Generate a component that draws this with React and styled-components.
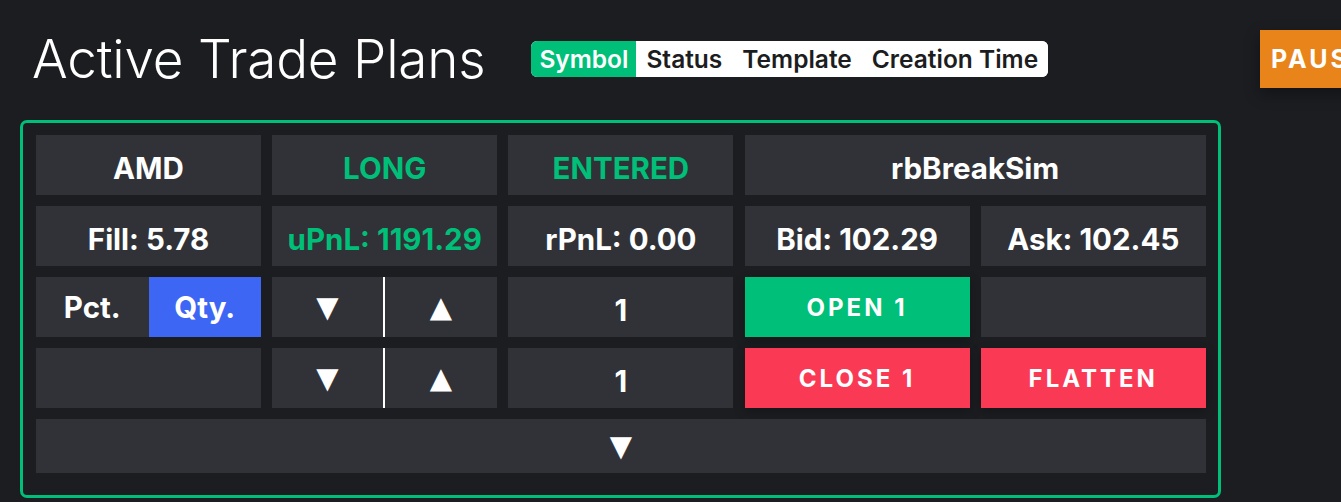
import React from 'react';
import styled, { createGlobalStyle } from 'styled-components';

const GlobalStyle = createGlobalStyle`
  html, body {
    margin: 0;
    padding: 0;
    background: #1c1d21;
    overflow: hidden;
  }
  body {
    font-family: Inter, "Noto Sans", sans-serif;
    color: #fff;
  }
`;

const Page = styled.div`
  width: 1400px;
  padding: 30px 0 0 20px;
  box-sizing: border-box;
`;

const Header = styled.div`
  display: flex;
  align-items: center;
  height: 58px;
  margin-bottom: 32px;
`;

const Title = styled.h1`
  margin: 0 0 0 12px;
  font-size: 53px;
  font-weight: 300;
  letter-spacing: -0.2px;
  line-height: 58px;
  white-space: nowrap;
`;

const SortTabs = styled.div`
  display: flex;
  margin-left: 46px;
  background: #fff;
  border-radius: 6px;
  overflow: hidden;
  height: 36px;
`;

const SortTab = styled.button`
  border: 0;
  margin: 0;
  padding: 0 ${(p) => (p.active ? '8px' : '10px')};
  font-family: inherit;
  font-size: 24.5px;
  font-weight: 600;
  background: ${(p) => (p.active ? '#00bf78' : '#fff')};
  color: ${(p) => (p.active ? '#fff' : '#1c1d21')};
  cursor: pointer;
`;

const PauseButton = styled.button`
  margin-left: auto;
  width: 140px;
  height: 58px;
  border: 0;
  background: #e8841a;
  color: #fff;
  font-family: inherit;
  font-size: 25px;
  font-weight: 700;
  letter-spacing: 3px;
  text-align: left;
  padding-left: 11px;
  box-shadow: 0 6px 14px rgba(0, 0, 0, 0.35);
`;

const Card = styled.div`
  width: 1201px;
  box-sizing: border-box;
  border: 3px solid #00bf78;
  border-radius: 7px;
  padding: 12px 12px 22px 13px;
`;

const Grid = styled.div`
  display: grid;
  grid-template-columns: repeat(5, 225px);
  grid-template-rows: 60px 60px 60px 60px 54px;
  column-gap: 11.2px;
  row-gap: 11px;
`;

const Cell = styled.div`
  grid-column: span ${(p) => p.span || 1};
  display: flex;
  align-items: center;
  justify-content: center;
  padding-top: 5px;
  box-sizing: border-box;
  background: #313237;
  color: ${(p) => (p.green ? '#00bf78' : '#fff')};
  font-size: 29.5px;
  font-weight: 700;
  white-space: nowrap;
`;

const Split = styled.div`
  display: grid;
  grid-template-columns: 1fr 1fr;
  background: #313237;
`;

const SplitPart = styled.button`
  border: 0;
  margin: 0;
  padding: 0;
  display: flex;
  align-items: center;
  justify-content: center;
  font-family: inherit;
  font-size: 29.5px;
  font-weight: 700;
  color: #fff;
  background: ${(p) => (p.selected ? '#3d66f5' : 'transparent')};
  border-right: ${(p) => (p.divider ? '2px solid #fff' : '0')};
`;

const Arrow = styled.span`
  font-family: "DejaVu Sans", sans-serif;
  font-size: 29px;
  line-height: 1;
`;

const ActionButton = styled.button`
  border: 0;
  margin: 0;
  display: flex;
  align-items: center;
  justify-content: center;
  font-family: inherit;
  font-size: 24px;
  font-weight: 700;
  letter-spacing: 3px;
  color: #fff;
  background: ${(p) => (p.tone === 'red' ? '#fa3a55' : '#00bf78')};
  box-shadow: 0 4px 10px rgba(0, 0, 0, 0.25);
  cursor: pointer;
`;

const Expander = styled.button`
  grid-column: span 5;
  border: 0;
  margin: 0;
  display: flex;
  align-items: center;
  justify-content: center;
  background: #313237;
  color: #fff;
  cursor: pointer;
`;

const Stepper = () => (
  <Split>
    <SplitPart divider>
      <Arrow>▼</Arrow>
    </SplitPart>
    <SplitPart>
      <Arrow>▲</Arrow>
    </SplitPart>
  </Split>
);

const tabs = ['Symbol', 'Status', 'Template', 'Creation Time'];

const App = () => {
  return (
    <Page>
      <GlobalStyle />
      <Header>
        <Title>Active Trade Plans</Title>
        <SortTabs>
          {tabs.map((t) => (
            <SortTab key={t} active={t === 'Symbol'}>
              {t}
            </SortTab>
          ))}
        </SortTabs>
        <PauseButton>PAUSE</PauseButton>
      </Header>
      <Card>
        <Grid>
          <Cell>AMD</Cell>
          <Cell green>LONG</Cell>
          <Cell green>ENTERED</Cell>
          <Cell span={2}>rbBreakSim</Cell>

          <Cell>Fill: 5.78</Cell>
          <Cell green>uPnL: 1191.29</Cell>
          <Cell>rPnL: 0.00</Cell>
          <Cell>Bid: 102.29</Cell>
          <Cell>Ask: 102.45</Cell>

          <Split>
            <SplitPart>Pct.</SplitPart>
            <SplitPart selected>Qty.</SplitPart>
          </Split>
          <Stepper />
          <Cell>1</Cell>
          <ActionButton>OPEN 1</ActionButton>
          <Cell />

          <Cell />
          <Stepper />
          <Cell>1</Cell>
          <ActionButton tone="red">CLOSE 1</ActionButton>
          <ActionButton tone="red">FLATTEN</ActionButton>

          <Expander>
            <Arrow>▼</Arrow>
          </Expander>
        </Grid>
      </Card>
    </Page>
  );
};

export default App;
